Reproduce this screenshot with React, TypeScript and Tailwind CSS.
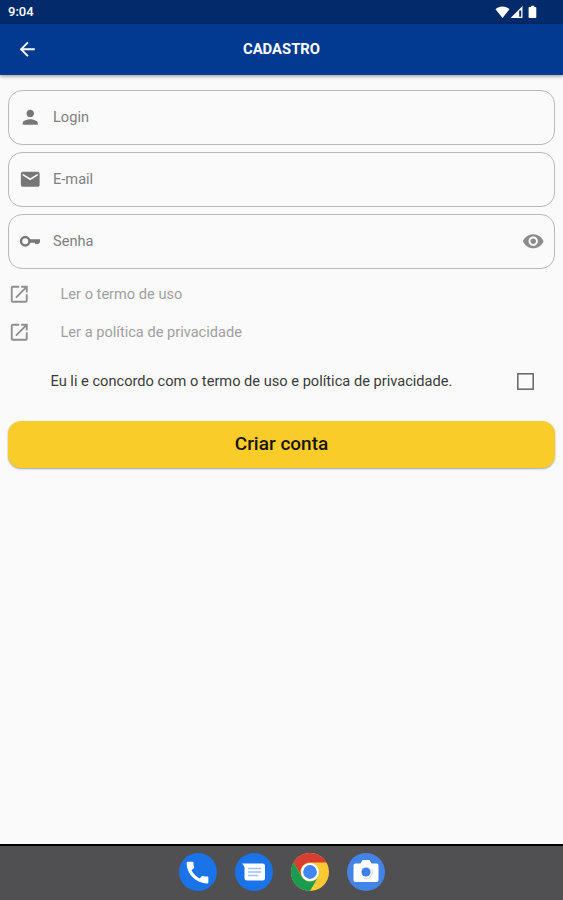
import type { ComponentType } from "react";
import {
  MdArrowBack,
  MdCall,
  MdEmail,
  MdLaunch,
  MdPerson,
  MdRemoveRedEye,
} from "react-icons/md";

type FieldProps = {
  icon: ComponentType<{ className?: string }>;
  label: string;
  secret?: boolean;
};

function KeyIcon({ className }: { className?: string }) {
  return (
    <svg className={className} viewBox="0 0 22 22">
      <circle cx="6.1" cy="11" r="4.1" fill="none" stroke="currentColor" strokeWidth="2.4" />
      <path d="M10 9H20.500v3.500h-1.200v1.200h-3.600v-1.200h-5.700z" fill="currentColor" />
    </svg>
  );
}

function Field({ icon: Icon, label, secret }: FieldProps) {
  return (
    <div className="flex h-[55px] items-center rounded-[14px] border border-[#b8b8b8] pr-[10px] pb-[1px] pl-[10px]">
      <Icon className="size-[22.5px] shrink-0 text-[#777777]" />
      <span className="ml-[11.5px] flex-1 pb-[1px] text-[14.6px] leading-5 text-[#808080]">
        {label}
      </span>
      {secret && <MdRemoveRedEye className="size-[22.5px] text-[#8c8c8c]" />}
    </div>
  );
}

function TermsLink({ label }: { label: string }) {
  return (
    <a className="flex h-[38px] items-center text-[#a0a0a0]">
      <MdLaunch className="size-[22.5px] shrink-0 text-[#8f8f8f]" />
      <span className="ml-[30px] text-[14.6px] leading-5">{label}</span>
    </a>
  );
}

function StatusBar() {
  return (
    <div className="flex h-6 items-center bg-[#032b6b] pr-[25px] pl-2 text-white">
      <span className="flex-1 text-[13px] leading-4 font-medium">9:04</span>
      <svg className="h-[14px] w-[43px]" viewBox="0 0 43 14" fill="#fff">
        <path d="M0.5 4.2C4.5 0.6 10.5 0.6 14.5 4.2L7.5 13Z" />
        <path fillRule="evenodd" d="M27.5 1V13H15.5ZM26.2 5.5H24.2V11.8H26.2Z" />
        <path d="M36.2 0.700h3v1.300h1.400c.4 0 .7.3.7.7v9.600c0 .4-.3.7-.7.7h-6.300c-.4 0-.7-.3-.7-.7V2.700c0-.4.3-.7.7-.7h1.900z" />
      </svg>
    </div>
  );
}

function MessagesIcon() {
  return (
    <svg className="size-[38px]" viewBox="0 0 38 38">
      <circle cx="19" cy="19" r="19" fill="#1a73e8" />
      <path d="M7 10.500h20.500a2.500 2.500 0 0 1 2.500 2.500v12a2.500 2.500 0 0 1-2.500 2.500h-15.500a2.500 2.500 0 0 1-2.500-2.500V14z" fill="#fff" />
      <path d="M13 15.500h13M13 19h13M13 22.500h10" stroke="#9dc0f5" strokeWidth="1.700" />
    </svg>
  );
}

function ChromeIcon() {
  return (
    <svg className="size-[38px]" viewBox="0 0 48 48">
      <circle cx="24" cy="24" r="24" fill="#fbc934" />
      <path d="M3.220 12A24 24 0 0 1 44.780 12H24A12 12 0 0 0 13.610 30Z" fill="#d93c30" />
      <path d="M3.220 12L13.610 30A12 12 0 0 0 34.390 30L24 48A24 24 0 0 1 3.220 12Z" fill="#199b50" />
      <circle cx="24" cy="24" r="11.500" fill="#fff" />
      <circle cx="24" cy="24" r="8.700" fill="#4285f4" />
    </svg>
  );
}

function CameraIcon() {
  return (
    <svg className="size-[38px]" viewBox="0 0 38 38">
      <circle cx="19" cy="19" r="19" fill="#4484e6" />
      <path d="M8.500 10.500h5l2-3.500h7l2 3.500h5a2 2 0 0 1 2 2v14.500a2 2 0 0 1-2 2h-21a2 2 0 0 1-2-2V12.500a2 2 0 0 1 2-2z" fill="#fff" />
      <path d="M25 16a7 7 0 0 1-8 9.500" fill="none" stroke="#dbe2ec" strokeWidth="1.500" />
      <circle cx="19" cy="19" r="4.600" fill="#3f7fe8" />
    </svg>
  );
}

export default function App() {
  return (
    <div className="flex h-[900px] w-[563px] flex-col overflow-hidden bg-[#fafafa] font-[Roboto,sans-serif]">
      <StatusBar />
      <header className="flex h-[51px] items-center bg-[#033a91] px-[15.5px] pb-[1px] text-white shadow-[0_1px_4px_rgba(0,0,0,0.45)]">
        <MdArrowBack className="size-[22.5px]" />
        <h1 className="flex-1 pr-[22.5px] text-center text-[14.8px] leading-5 font-bold">
          CADASTRO
        </h1>
      </header>

      <main className="flex flex-1 flex-col px-2 pt-[15px]">
        <form className="flex flex-col gap-[7px]">
          <Field icon={MdPerson} label="Login" />
          <Field icon={MdEmail} label="E-mail" />
          <Field icon={KeyIcon} label="Senha" secret />
        </form>

        <div className="mt-[6px]">
          <TermsLink label="Ler o termo de uso" />
          <TermsLink label="Ler a política de privacidade" />
        </div>

        <label className="mt-[19px] flex h-[22px] items-center pr-[21px] pl-[42.5px]">
          <span className="flex-1 text-[14.62px] leading-5 text-[#3a3a3a]">
            Eu li e concordo com o termo de uso e política de privacidade.
          </span>
          <svg className="size-[17px]" viewBox="0 0 17 17">
            <rect x="0.800" y="0.800" width="15.400" height="15.400" fill="none" stroke="#6c6c6c" strokeWidth="1.600" />
          </svg>
        </label>

        <button className="mt-[29px] h-[47px] rounded-[13px] bg-[#facc2a] text-[19px] font-medium text-[#17150a] shadow-[0_1px_2px_rgba(0,0,0,0.35)]">
          Criar conta
        </button>
      </main>

      <nav className="flex h-14 items-center justify-center gap-[18px] border-t-2 border-black bg-[#505053] pb-[2px]">
        <span className="flex size-[38px] items-center justify-center rounded-full bg-[#1a73e8]">
          <MdCall className="size-[29px] text-white" />
        </span>
        <MessagesIcon />
        <ChromeIcon />
        <CameraIcon />
      </nav>
    </div>
  );
}
